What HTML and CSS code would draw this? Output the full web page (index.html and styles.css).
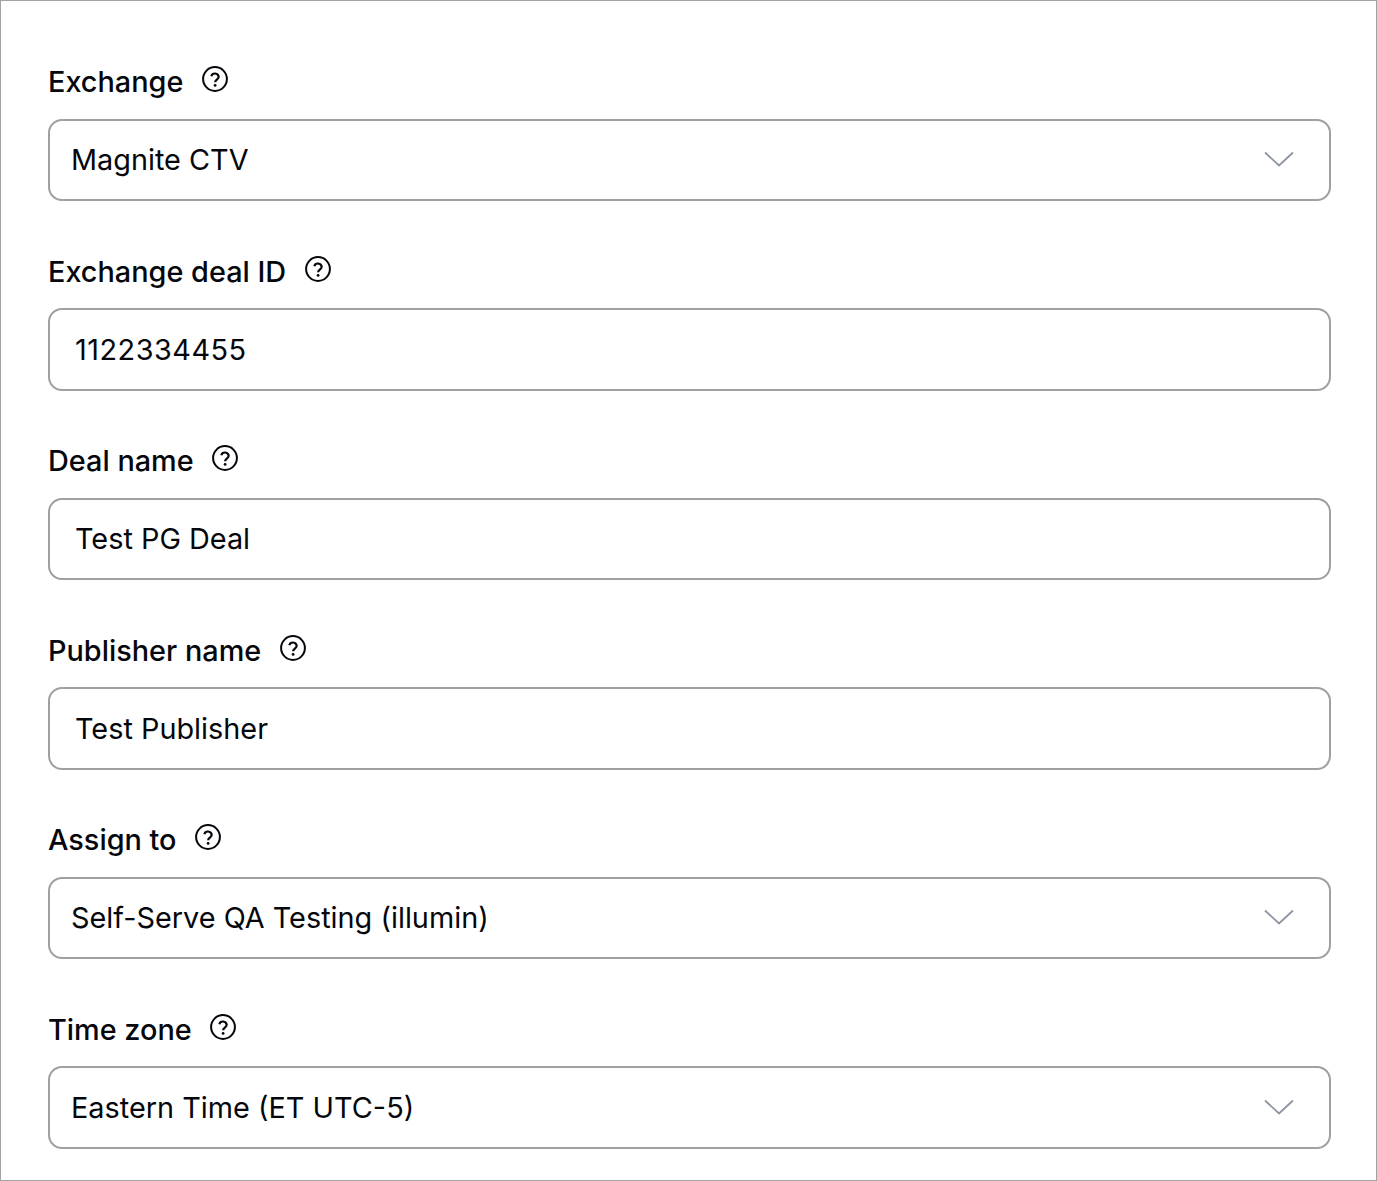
FILE: index.html
```html
<!DOCTYPE html>
<html lang="en">
<head>
<meta charset="utf-8">
<title>Deal form</title>
<link rel="stylesheet" href="styles.css">
</head>
<body>
<svg class="sprite" width="0" height="0" aria-hidden="true">
  <symbol id="help" viewBox="0 0 26 26">
    <circle cx="13" cy="13" r="11.9" fill="none" stroke="currentColor" stroke-width="2"/>
    <path d="M9.3 10.2a3.8 3.8 0 0 1 7.4 .6c0 2.600-3.600 3-3.600 5.400" fill="none" stroke="currentColor" stroke-width="2.200"/>
    <circle cx="13.100" cy="19.400" r="1.400" fill="currentColor"/>
  </symbol>
  <symbol id="chev" viewBox="0 0 30 16">
    <path d="M1 1.500 15 14.500 29 1.500" fill="none" stroke="currentColor" stroke-width="1.800"/>
  </symbol>
</svg>
<form class="form">
  <div class="field">
    <div class="label"><span>Exchange</span><svg class="help"><use href="#help"/></svg></div>
    <div class="box select"><span>Magnite CTV</span><svg class="chev"><use href="#chev"/></svg></div>
  </div>
  <div class="field">
    <div class="label"><span>Exchange deal ID</span><svg class="help"><use href="#help"/></svg></div>
    <div class="box input num"><span>1122334455</span></div>
  </div>
  <div class="field">
    <div class="label"><span>Deal name</span><svg class="help"><use href="#help"/></svg></div>
    <div class="box input"><span>Test PG Deal</span></div>
  </div>
  <div class="field">
    <div class="label"><span>Publisher name</span><svg class="help"><use href="#help"/></svg></div>
    <div class="box input"><span>Test Publisher</span></div>
  </div>
  <div class="field">
    <div class="label"><span>Assign to</span><svg class="help"><use href="#help"/></svg></div>
    <div class="box select"><span>Self-Serve QA Testing (illumin)</span><svg class="chev"><use href="#chev"/></svg></div>
  </div>
  <div class="field">
    <div class="label"><span>Time zone</span><svg class="help"><use href="#help"/></svg></div>
    <div class="box select"><span>Eastern Time (ET UTC-5)</span><svg class="chev"><use href="#chev"/></svg></div>
  </div>
</form>
</body>
</html>
```
FILE: styles.css
```css
* { box-sizing: border-box; }
html, body { margin: 0; height: 100%; background: #fff; }
body { font-family: Inter, "Liberation Sans", sans-serif; color: #05070c; overflow: hidden; }
.sprite { display: block; height: 0; }
.form {
  height: 1181px;
  border: 1px solid #a3a3a3;
  padding: 60.4px 45px 0 47px;
  display: flex;
  flex-direction: column;
  gap: 49.5px;
}
.field { display: flex; flex-direction: column; gap: 15.5px; }
.label {
  display: flex;
  align-items: center;
  gap: 18.5px;
  height: 42px;
  font-size: 28.85px;
  font-weight: 500;
  line-height: 42px;
}
.help { width: 26px; height: 26px; color: #05070c; flex: none; position: relative; top: -3px; }
.box {
  height: 82.5px;
  border: 2px solid #a0a0a0;
  border-radius: 14px;
  display: flex;
  align-items: center;
  justify-content: space-between;
  font-size: 28.85px;
  line-height: 40px;
  background: #fff;
}
.select { padding: 0 35px 0 21px; }
.input { padding: 0 25px; }
.num { letter-spacing: 0.5px; }
.chev { width: 30px; height: 16px; color: #8d95a3; flex: none; position: relative; top: -1px; }
```
